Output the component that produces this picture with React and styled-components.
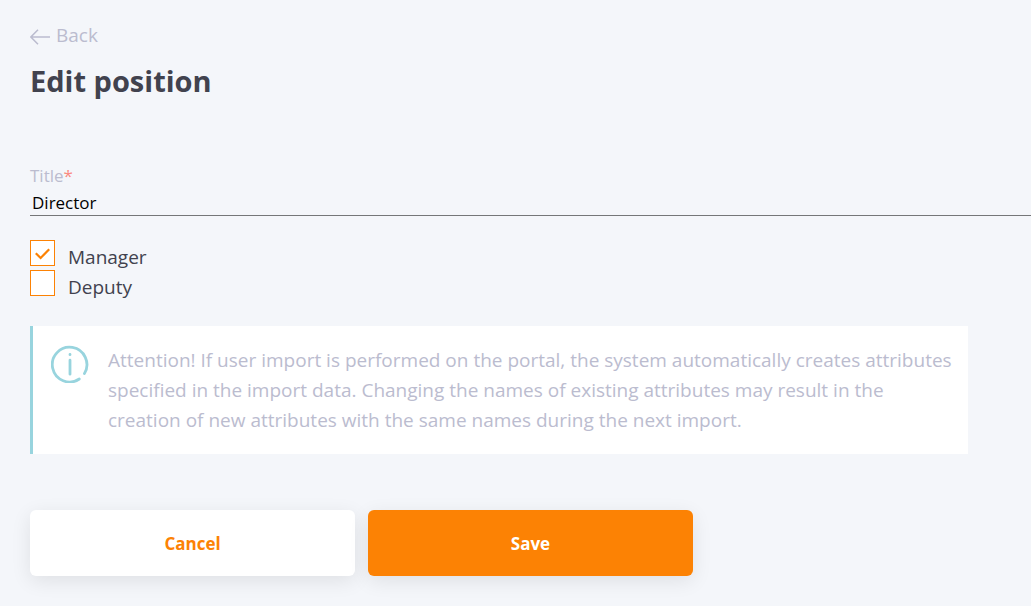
import React, { useState } from "react";
import styled, { createGlobalStyle } from "styled-components";

const GlobalStyle = createGlobalStyle`
  * {
    box-sizing: border-box;
  }

  body {
    margin: 0;
    background-color: #f4f6fa;
    color: #41424e;
    font-family: "Segoe UI", "Open Sans", "Noto Sans", sans-serif;
    font-size: 19px;
    line-height: 30px;
  }
`;

const Page = styled.main`
  padding: 20px 0 30px 30px;
`;

const BackLink = styled.a`
  display: inline-flex;
  align-items: center;
  gap: 6px;
  color: #bbbccf;
  text-decoration: none;

  svg {
    margin-top: 4px;
  }

  :hover {
    color: #fc8204;
  }
`;

const Heading = styled.h1`
  margin: 7px 0 64px;
  font-size: 29px;
  line-height: 42px;
  font-weight: 700;
`;

const Field = styled.div`
  margin-bottom: 24px;

  label {
    display: block;
    color: #bbbccf;
    font-size: 17px;
    line-height: 20px;
  }

  label span {
    color: #fb8a80;
  }

  input {
    display: block;
    width: 100%;
    height: 30px;
    padding: 4px 2px 0;
    border: 0;
    border-bottom: 1px solid #757678;
    border-radius: 0;
    outline: none;
    background-color: transparent;
    color: #000;
    font-family: inherit;
    font-size: 17px;
  }
`;

const CheckRow = styled.label`
  display: flex;
  align-items: flex-start;
  gap: 13px;
  height: 30px;
  line-height: 34px;
  cursor: pointer;
`;

const CheckBox = styled.span`
  display: grid;
  flex: none;
  width: 25px;
  height: 26px;

  input,
  svg {
    grid-area: 1 / 1;
  }

  input {
    appearance: none;
    width: 100%;
    height: 100%;
    margin: 0;
    border: 1px solid #fc8204;
    background-color: #fff;
    cursor: pointer;
  }

  svg {
    place-self: center;
    z-index: 1;
    margin-top: 2px;
    pointer-events: none;
  }
`;

const Notice = styled.section`
  display: flex;
  align-items: flex-start;
  gap: 19px;
  max-width: 938px;
  margin: 26px 0 56px;
  padding: 19px 10px 19px 18px;
  border-left: 3px solid #98d4de;
  background-color: #fff;
  color: #bbbccf;

  svg {
    flex: none;
  }

  p {
    margin: 0;
  }
`;

const Actions = styled.div`
  display: flex;
  gap: 13px;
`;

const Button = styled.button`
  width: 325px;
  height: 66px;
  border: 0;
  border-radius: 6px;
  background-color: ${(props) => (props.$primary ? "#fc8204" : "#fff")};
  color: ${(props) => (props.$primary ? "#fff" : "#fc8204")};
  box-shadow: 0 5px 20px rgba(0, 0, 0, 0.09);
  font-family: inherit;
  font-size: 17px;
  font-weight: 700;
  cursor: pointer;
`;

const ArrowIcon = () => (
  <svg width="20" height="16" viewBox="0 0 20 16" fill="none" stroke="currentColor" strokeWidth="1.5" aria-hidden="true">
    <path d="M20 8H1M8 .7L.9 8L8 15.3" />
  </svg>
);

const CheckIcon = () => (
  <svg width="15" height="12" viewBox="0 0 15 12" fill="none" stroke="#fc8204" strokeWidth="2.2" aria-hidden="true">
    <path d="M.8 5.3L5.6 10L14.2 1.3" />
  </svg>
);

const InfoIcon = () => (
  <svg width="38" height="38" viewBox="0 0 38 38" fill="none" stroke="#98d4de" strokeWidth="2.8" strokeLinecap="round" aria-hidden="true">
    <path d="M28.3 34A17.3 17.4 0 1 1 33.4 28.6" />
    <path d="M19 15.2V29.2M19 9.5V9.7" />
  </svg>
);

const CheckOption = ({ name, label, checked, onChange }) => (
  <CheckRow>
    <CheckBox>
      <input
        type="checkbox"
        name={name}
        checked={checked}
        onChange={(e) => onChange(e.target.checked)}
      />
      {checked && <CheckIcon />}
    </CheckBox>
    {label}
  </CheckRow>
);

const App = () => {
  const [title, setTitle] = useState("Director");
  const [manager, setManager] = useState(true);
  const [deputy, setDeputy] = useState(false);

  return (
    <>
      <GlobalStyle />
      <Page>
        <BackLink href="#back">
          <ArrowIcon />
          Back
        </BackLink>
        <Heading>Edit position</Heading>
        <form onSubmit={(e) => e.preventDefault()}>
          <Field>
            <label htmlFor="title">
              Title<span>*</span>
            </label>
            <input
              id="title"
              type="text"
              value={title}
              onChange={(e) => setTitle(e.target.value)}
            />
          </Field>
          <CheckOption name="manager" label="Manager" checked={manager} onChange={setManager} />
          <CheckOption name="deputy" label="Deputy" checked={deputy} onChange={setDeputy} />
          <Notice>
            <InfoIcon />
            <p>
              Attention! If user import is performed on the portal, the system
              automatically creates attributes specified in the import data.
              Changing the names of existing attributes may result in the
              creation of new attributes with the same names during the next
              import.
            </p>
          </Notice>
          <Actions>
            <Button type="button">Cancel</Button>
            <Button type="submit" $primary>Save</Button>
          </Actions>
        </form>
      </Page>
    </>
  );
};

export default App;
